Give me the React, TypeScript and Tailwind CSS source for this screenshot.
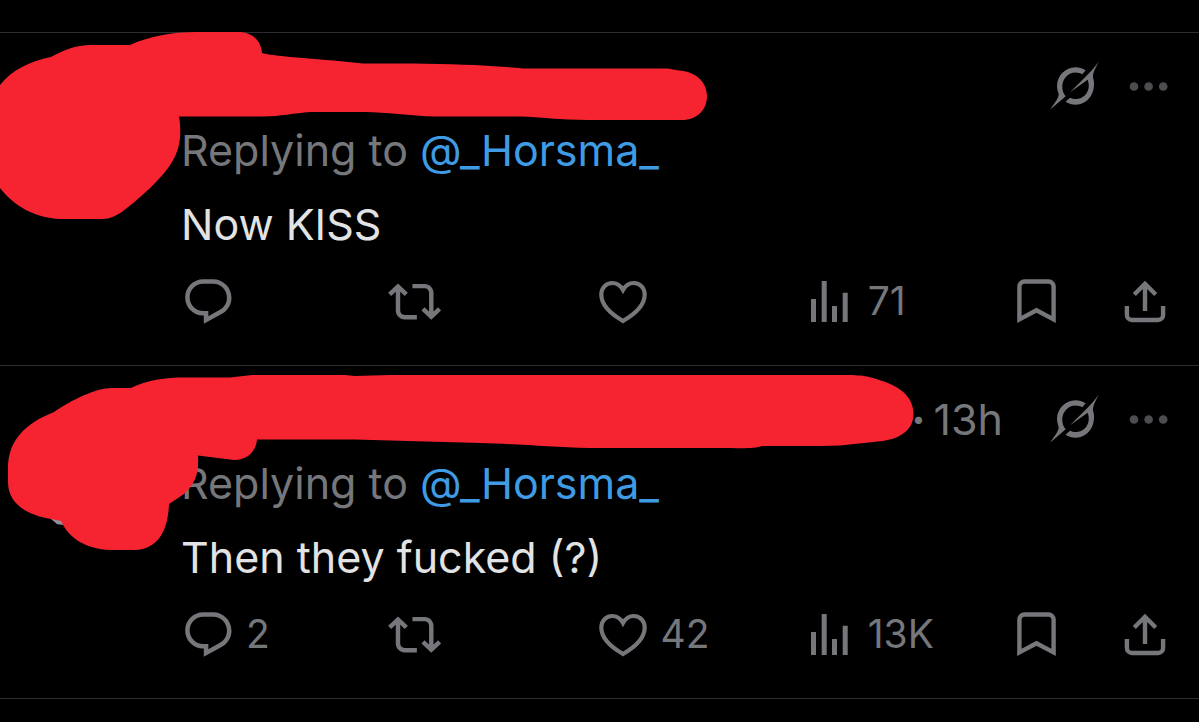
import type { ReactNode } from "react";

function Icon({ children }: { children: ReactNode }) {
  return (
    <svg viewBox="0 0 54 54" className="size-[54px] shrink-0" fill="currentColor" aria-hidden="true">
      {children}
    </svg>
  );
}

function ReplyIcon() {
  return (
    <Icon>
      <path
        transform="translate(0.2 0.8) scale(2.26)"
        d="M1.751 10c0-4.42 3.584-8 8.005-8h4.366c4.49 0 8.129 3.64 8.129 8.13 0 2.96-1.607 5.68-4.196 7.11l-8.054 4.46v-3.69h-.067c-4.49.1-8.183-3.51-8.183-8.01zm8.005-6c-3.317 0-6.005 2.69-6.005 6 0 3.37 2.77 6.08 6.138 6.01l.351-.01h1.761v2.3l5.087-2.81c1.951-1.08 3.163-3.13 3.163-5.36 0-3.39-2.744-6.13-6.129-6.13H9.756z"
      />
    </Icon>
  );
}

function RepostIcon() {
  return (
    <Icon>
      <path
        transform="translate(0 1) scale(2.22)"
        d="M4.5 3.88l4.432 4.14-1.364 1.46L5.5 7.55V16c0 1.1.896 2 2 2H13v2H7.5c-2.209 0-4-1.79-4-4V7.55L1.432 9.48.068 8.02 4.5 3.88zM16.5 6H11V4h5.5c2.209 0 4 1.79 4 4v8.45l2.068-1.93 1.364 1.46-4.432 4.14-4.432-4.14 1.364-1.46 2.068 1.93V8c0-1.1-.896-2-2-2z"
      />
    </Icon>
  );
}

function HeartIcon() {
  return (
    <Icon>
      <path
        d="M27 16C24.3 11.3 20.5 9 16.3 9 9.8 9 5.3 14 5.3 20.6 5.3 30.5 13 39 27 47 41 39 48.7 30.5 48.7 20.6 48.7 14 44.2 9 37.7 9 33.5 9 29.7 11.3 27 16Z"
        fill="none"
        stroke="currentColor"
        strokeWidth="4.2"
      />
    </Icon>
  );
}

function ViewsIcon() {
  return (
    <Icon>
      <path d="M8 25h5v23H8zM18.7 7h5v41h-5zM29 32h5v16h-5zM39.7 18.7h5V48h-5z" />
    </Icon>
  );
}

function BookmarkIcon() {
  return (
    <Icon>
      <path
        d="M9.4 45.4V12.500a5 5 0 0 1 5-5h24.2a5 5 0 0 1 5 5v32.900L26.5 36.3Z"
        fill="none"
        stroke="currentColor"
        strokeWidth="4.4"
      />
    </Icon>
  );
}

function ShareIcon() {
  return (
    <Icon>
      <path
        d="M27 37V9.5M16.300 20.5 27 9.8l10.7 10.7M8.9 32v9a5 5 0 0 0 5 5h26.200a5 5 0 0 0 5-5v-9"
        fill="none"
        stroke="currentColor"
        strokeWidth="4.4"
      />
    </Icon>
  );
}

function GrokIcon() {
  return (
    <Icon>
      <path d="M22 33.3 38.600 16.800C42.500 13 46.500 8.500 50.700 2.700 47.500 9 44.700 13.500 45 18.500 46.500 22.500 46.600 29.500 44 34.800 41 41.500 34.500 45.700 27.500 45.700 24 45.700 20.700 44.900 17.500 42.800L22 38.700C26.500 41 32.500 40.500 36.700 36.500 41 32.300 41.700 26.500 39.700 20.700Z" />
      <path d="M37.700 11.300C34.500 9 31 8.200 27.500 8.200 17.500 8.200 9 16.500 9 27 9 30 10 32.500 10.600 34.800 11.200 39 6.500 44 2 50.700L17.700 37.300C15.200 34.500 14.100 30.700 14.300 27 14.500 19.500 20.500 13.500 27.500 13.500 30.200 13.500 32.400 14.200 34.300 15.300Z" />
    </Icon>
  );
}

function MoreIcon() {
  return (
    <Icon>
      <circle cx="16" cy="27.500" r="4.300" />
      <circle cx="30.600" cy="27.500" r="4.300" />
      <circle cx="45.200" cy="27.500" r="4.300" />
    </Icon>
  );
}

function Action({ label, count, children }: { label: string; count?: string; children: ReactNode }) {
  return (
    <button type="button" aria-label={label} className="flex flex-1 items-center gap-[11px] text-[39px]">
      {children}
      {count && <span>{count}</span>}
    </button>
  );
}

type PostProps = {
  text: string;
  time?: string;
  replies?: string;
  likes?: string;
  views: string;
  redaction: ReactNode;
};

function Post({ text, time, replies, likes, views, redaction }: PostProps) {
  return (
    <article className="relative border-t border-[#2b2d30] pt-[23px] pr-[27px] pb-[37px] pl-[181px] text-[#75777b]">
      <header className="flex h-[60px] items-center justify-end gap-4">
        {time && (
          <span className="mr-[29px] text-[43px] leading-[60px]">
            <span className="mr-2 font-bold">·</span>
            <time>{time}</time>
          </span>
        )}
        <button type="button" aria-label="Explain this post">
          <GrokIcon />
        </button>
        <button type="button" aria-label="More" className="text-[#4c4d50]">
          <MoreIcon />
        </button>
      </header>
      <p className="mt-1 text-[43px] leading-[60px]">
        Replying to{" "}
        <a href="#horsma" className="text-[#3f9be3]">
          @_Horsma_
        </a>
      </p>
      <p className="mt-[14px] text-[43px] leading-[60px] text-[#e2e3e4]">{text}</p>
      <div className="mt-5 flex h-[54px] items-center">
        <Action label="Reply" count={replies}>
          <ReplyIcon />
        </Action>
        <Action label="Repost">
          <RepostIcon />
        </Action>
        <Action label="Like" count={likes}>
          <HeartIcon />
        </Action>
        <Action label="Views" count={views}>
          <ViewsIcon />
        </Action>
        <button type="button" aria-label="Bookmark" className="mr-[54px]">
          <BookmarkIcon />
        </button>
        <button type="button" aria-label="Share">
          <ShareIcon />
        </button>
      </div>
      {redaction}
    </article>
  );
}

function FirstScribble() {
  return (
    <svg
      viewBox="0 0 720 200"
      className="pointer-events-none absolute -top-px left-0 w-[720px]"
      fill="#f62430"
      aria-hidden="true"
    >
      <path d="M0 53C12 38 30 29 51 25 64 18 75 13 91 13H130C150 4 172 0 197 0H238C252 0 261 8 262 21 276 25 325 27 363 31.500H412C455 32 485 33 523 36.500H665C671 36.500 674 38 683 39 697 41 707 51 707 64 707 78 697 88 682 88H588C560 88 540 85 520 84.500H435C410 84 385 80 365 80H310C295 81 280 84.500 263 84.500H179C182 102 180 117 172 130 162 147 140 166 122 180 115 184 110 187 103 187H60C35 186 14 174 0 156Z" />
    </svg>
  );
}

function SecondScribble() {
  return (
    <svg
      viewBox="0 0 930 200"
      className="pointer-events-none absolute top-0 left-0 w-[930px]"
      aria-hidden="true"
    >
      <path d="M51 153 57 158 63 159 62 150Z" fill="#8f9299" />
      <path
        d="M8 102C8 74 26 57 54 46 72 34 95 22 112 22H131C147 14 164 11.500 186 11.500H230L252 9H345L355 10 390 9H845C866 9 870 11 884 15.500 903 22 913.500 33 913.500 48 913.500 63 902 72 883 75L840 79.500 820 80H762C755 83 740 82 720 82H590C550 81 520 78 480 77L390 74.500 355 73.500H257C256 85 248 94 234 94L198 89.500C199 109 195 117 184 128L169 138C168 165 158 183 135 184H110C87 183 69 173 61 155L51 153C27 149 8 138 8 116Z"
        fill="#f62430"
      />
    </svg>
  );
}

export default function App() {
  return (
    <main className="min-h-screen bg-black pt-8 font-['Inter','Liberation_Sans',sans-serif]">
      <Post text="Now KISS" views="71" redaction={<FirstScribble />} />
      <Post
        text="Then they fucked (?)"
        time="13h"
        replies="2"
        likes="42"
        views="13K"
        redaction={<SecondScribble />}
      />
      <div className="border-t border-[#2b2d30] pb-[23px]" />
    </main>
  );
}
